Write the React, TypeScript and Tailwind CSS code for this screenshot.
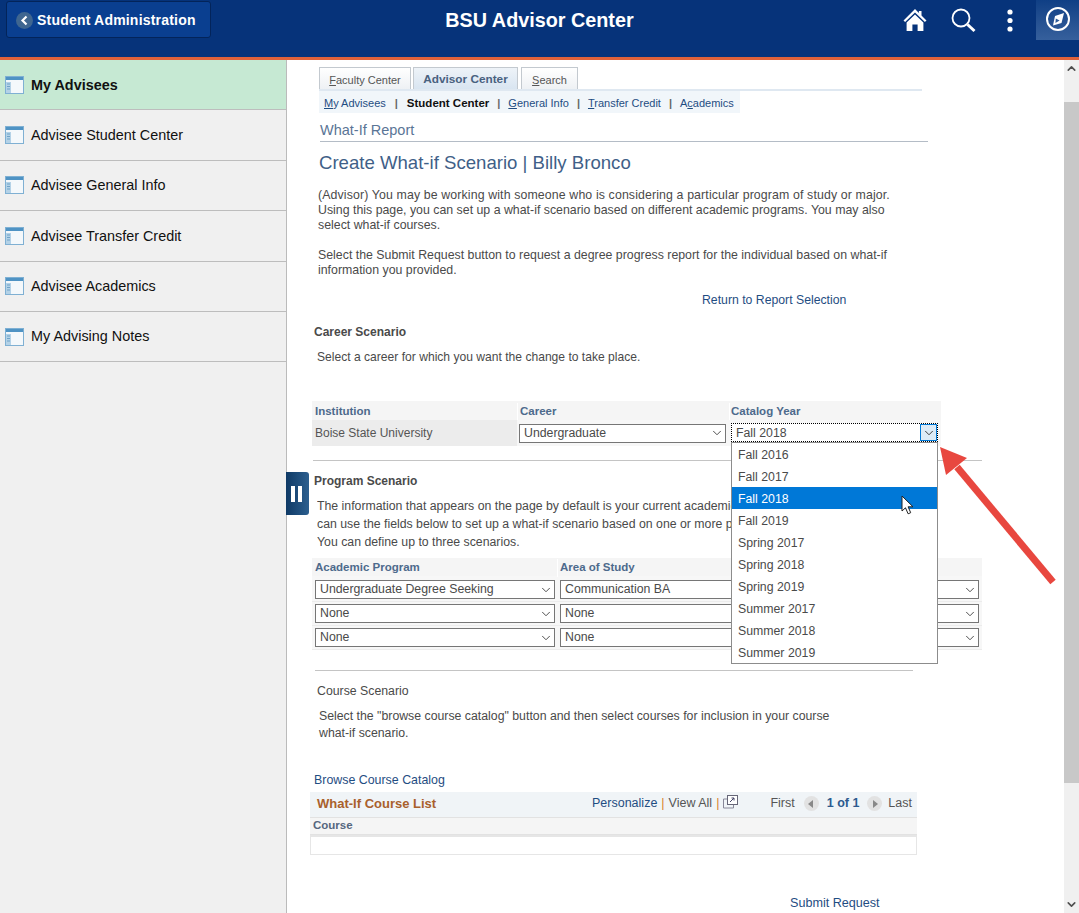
import { ChevronDown, ChevronUp } from "lucide-react";

const sideItems = [
  "My Advisees",
  "Advisee Student Center",
  "Advisee General Info",
  "Advisee Transfer Credit",
  "Advisee Academics",
  "My Advising Notes",
];

const terms = [
  "Fall 2016",
  "Fall 2017",
  "Fall 2018",
  "Fall 2019",
  "Spring 2017",
  "Spring 2018",
  "Spring 2019",
  "Summer 2017",
  "Summer 2018",
  "Summer 2019",
];

function PageIcon() {
  return (
    <svg width="19" height="18" viewBox="0 0 19 18" className="shrink-0">
      <rect x="0.5" y="0.5" width="18" height="17" fill="#f4f8fb" stroke="#7fb0d3" />
      <rect x="1" y="1" width="17" height="3" fill="#4f93c4" />
      <rect x="1" y="6" width="5" height="11" fill="#b4d2e7" />
      <path d="M2 8h3M2 10.5h3M2 13h3" stroke="#6fa3c8" strokeWidth="1" />
    </svg>
  );
}

function Select({ value, className }: { value: string; className: string }) {
  return (
    <div
      className={`flex h-[19px] items-center justify-between border border-[#767676] bg-white pl-[4px] pr-[1px] text-[12.3px] text-[#4a4a4a] ${className}`}
    >
      <span className="whitespace-nowrap">{value}</span>
      <ChevronDown size={14} strokeWidth={1.6} className="shrink-0 text-[#444]" />
    </div>
  );
}

function Header() {
  return (
    <header className="h-[60px] shrink-0 border-b-[3px] border-[#e0623a] bg-[#06337a]">
      <div className="grid h-[57px] grid-cols-[1fr_auto_1fr] items-start">
        <div className="ml-[6px] mt-[1px] flex h-[37px] w-[205px] items-center rounded-[3px] border border-[#03245a] bg-[#0a3f90] pl-[9px] pt-[1px]">
          <span className="flex h-[17px] w-[17px] items-center justify-center rounded-full bg-[#3f6690]">
            <svg width="9" height="11" viewBox="0 0 9 11">
              <path d="M6.5 1.5 2.5 5.5l4 4" fill="none" stroke="#fff" strokeWidth="2.2" />
            </svg>
          </span>
          <span className="ml-[4px] text-[14px] font-bold tracking-[0.2px] text-white">
            Student Administration
          </span>
        </div>
        <div className="pt-[7px] text-center text-[19.8px] font-bold leading-[26px] text-white">
          BSU Advisor Center
        </div>
        <div className="flex items-start justify-end">
          <svg width="24" height="24" viewBox="0 0 24 24" className="mt-[8px]">
            <path d="M12 1 0.5 12.5l1.6 1.6L12 4.4l9.9 9.7 1.6-1.6L18.5 7.6V3h-2.6v2.1z" fill="#fff" />
            <path d="M3.6 14.6 12 6.4l8.4 8.2V23H14.6v-6.4H9.4V23H3.6z" fill="#fff" />
          </svg>
          <svg width="25" height="25" viewBox="0 0 25 25" className="ml-[24px] mt-[8px]">
            <circle cx="10" cy="10" r="8.5" fill="none" stroke="#fff" strokeWidth="1.8" />
            <path d="M16.5 16.5 23.5 23" stroke="#fff" strokeWidth="3" />
          </svg>
          <svg width="6" height="24" viewBox="0 0 6 24" className="ml-[31px] mt-[9px]">
            <circle cx="3" cy="3" r="2.6" fill="#fff" />
            <circle cx="3" cy="11.5" r="2.6" fill="#fff" />
            <circle cx="3" cy="20" r="2.6" fill="#fff" />
          </svg>
          <div className="ml-[23px] flex h-[40px] w-[43px] items-center justify-center bg-gradient-to-b from-[#0f3f85] to-[#36609c] pb-[2px] pl-[1px]">
            <svg width="26" height="26" viewBox="0 0 26 26">
              <circle cx="13" cy="13" r="11" fill="none" stroke="#fff" strokeWidth="2" />
              <path d="M19 7 16.5 17 8 19.5 10 10z" fill="#fff" />
              <path d="M10.8 12.5 14.6 14.6 10.4 17z" fill="#2d5a98" />
            </svg>
          </div>
        </div>
      </div>
    </header>
  );
}

function Sidebar() {
  return (
    <aside className="w-[287px] shrink-0 border-r border-[#bbb] bg-[#f0f0f0]">
      {sideItems.map((item, i) => (
        <div
          key={item}
          className={`flex h-[50.4px] items-center border-b border-[#bdbdbd] pl-[5px] text-[#111] ${
            i === 0 ? "bg-[#c6e9d3] font-bold" : ""
          }`}
        >
          <PageIcon />
          <span className={`ml-[7px] text-[14.4px] ${i === 0 ? "pt-[2px]" : "pt-[1px]"}`}>{item}</span>
        </div>
      ))}
    </aside>
  );
}

function Tabs() {
  return (
    <div className="ml-[32px] w-[603px]">
      <div className="flex h-[23px] items-end gap-[2px] border-b-2 border-[#dfe8f1]">
        <div className="flex h-[22px] w-[92px] items-center justify-center border border-b-0 border-[#c3c9cf] bg-gradient-to-b from-white to-[#eef1f4] pt-[3px] text-[11px] text-[#555]">
          <span><u>F</u>aculty Center</span>
        </div>
        <div className="flex h-[22px] w-[105px] items-center justify-center border border-b-0 border-[#c3c9cf] bg-gradient-to-b from-[#eef3f8] to-[#d9e5f1] pt-[2px] text-[11.8px] font-bold text-[#49617f]">
          Advisor Center
        </div>
        <div className="ml-[1px] flex h-[22px] w-[57px] items-center justify-center border border-b-0 border-[#c3c9cf] bg-gradient-to-b from-white to-[#eef1f4] pt-[3px] text-[11px] text-[#555]">
          <span><u>S</u>earch</span>
        </div>
      </div>
      <div className="flex h-[22px] w-[421px] items-center bg-[#f1f6fa] pl-[5px] pt-[3px] text-[11px] text-[#1f4d82]">
        <span><u>M</u>y Advisees</span>
        <span className="mx-[9px] font-bold text-[#666]">|</span>
        <span className="text-[11.5px] font-bold text-[#111]">Student Center</span>
        <span className="mx-[8px] font-bold text-[#666]">|</span>
        <span><u>G</u>eneral Info</span>
        <span className="mx-[8px] font-bold text-[#666]">|</span>
        <span><u>T</u>ransfer Credit</span>
        <span className="mx-[8px] font-bold text-[#666]">|</span>
        <span>A<u>c</u>ademics</span>
      </div>
    </div>
  );
}

function IntroText() {
  return (
    <div className="ml-[31px] text-[12.35px] leading-[15px] text-[#4a4a4a]">
      <p className="tracking-[0.12px]">(Advisor) You may be working with someone who is considering a particular program of study or major.</p>
      <p>Using this page, you can set up a what-if scenario based on different academic programs. You may also</p>
      <p>select what-if courses.</p>
      <p className="mt-[15px]">Select the Submit Request button to request a degree progress report for the individual based on what-if</p>
      <p>information you provided.</p>
    </div>
  );
}

function CareerTable() {
  return (
    <div className="ml-[25px] mt-[36px] w-[629px] text-[11.5px]">
      <div className="flex h-[19px] items-center bg-[#f5f5f5] pt-[2px] font-bold text-[#4d6a8c]">
        <div className="w-[205px] pl-[3px]">Institution</div>
        <div className="w-[212px] border-l border-white pl-[2px]">Career</div>
        <div className="border-l border-white pl-[1px]">Catalog Year</div>
      </div>
      <div className="flex h-[26px] items-center bg-[#f7f7f7]">
        <div className="flex h-[26px] w-[205px] items-center bg-[#ececec] pl-[3px] text-[12px] text-[#555]">
          Boise State University
        </div>
        <Select value="Undergraduate" className="ml-[2px] w-[207px]" />
      </div>
    </div>
  );
}

function ProgramTable() {
  return (
    <div className="ml-[25px] mt-[7px] w-[670px]">
      <div className="flex h-[18px] items-center bg-[#f5f5f5] pt-[2px] text-[11.5px] font-bold text-[#4d6a8c]">
        <div className="w-[245px] pl-[3px]">Academic Program</div>
        <div className="border-l border-white pl-[2px]">Area of Study</div>
      </div>
      <div className="bg-[#f7f7f7] pt-[2px]">
        {[
          ["Undergraduate Degree Seeking", "Communication BA"],
          ["None", "None"],
          ["None", "None"],
        ].map((row, i) => (
          <div key={i} className="flex h-[24px] items-start border-b border-[#ececec] pl-[3px] pt-[2px]">
            <Select value={row[0]} className="w-[240px]" />
            <Select value={row[1]} className="ml-[5px] w-[210px]" />
            <Select value="" className="ml-[5px] w-[204px]" />
          </div>
        ))}
      </div>
    </div>
  );
}

function CourseList() {
  return (
    <div className="ml-[23px] mt-[4px] w-[607px] text-[12.5px]">
      <div className="flex h-[25px] items-center bg-[#f0f4f7] pb-[2px] pl-[7px] pr-[5px]">
        <span className="text-[13px] font-bold text-[#a9602c]">What-If Course List</span>
        <span className="ml-auto text-[#1f4d82]">Personalize</span>
        <span className="mx-[4px] text-[#d9822b]">|</span>
        <span className="text-[#555]">View All</span>
        <span className="mx-[4px] text-[#d9822b]">|</span>
        <svg width="15" height="14" viewBox="0 0 15 14" className="mb-[3px]">
          <rect x="4.5" y="0.5" width="10" height="9" fill="#fff" stroke="#667" />
          <path d="M4 4H0.5v9h10V10" fill="none" stroke="#889" />
          <path d="M7 7 11 3M8.5 3H11V5.5" fill="none" stroke="#446" />
        </svg>
        <span className="ml-[32px] text-[#555]">First</span>
        <span className="ml-[9px] flex h-[15px] w-[15px] items-center justify-center rounded-full bg-[#e2e2e2]">
          <svg width="6" height="8" viewBox="0 0 6 8"><path d="M5 0v8L0 4z" fill="#888" /></svg>
        </span>
        <span className="ml-[8px] font-bold text-[#2c5b8f]">1 of 1</span>
        <span className="ml-[8px] flex h-[15px] w-[15px] items-center justify-center rounded-full bg-[#e2e2e2]">
          <svg width="6" height="8" viewBox="0 0 6 8"><path d="M1 0v8l5-4z" fill="#888" /></svg>
        </span>
        <span className="ml-[6px] text-[#555]">Last</span>
      </div>
      <div className="flex h-[18px] items-center border-y border-[#e2e2e2] bg-[#f5f5f5] pl-[3px] text-[11.5px] font-bold text-[#55677f]">
        Course
      </div>
      <div className="h-[20px] border border-t-2 border-[#e6e6e6]" />
    </div>
  );
}

function Scrollbar() {
  return (
    <div className="flex w-[15px] shrink-0 flex-col bg-[#f0f0f0]">
      <div className="flex h-[42px] justify-center pt-[2px]">
        <ChevronUp size={13} strokeWidth={3} className="text-[#505050]" />
      </div>
      <div className="h-[681px] bg-[#c8c8c8]" />
      <div className="mt-auto flex justify-center pb-[2px]">
        <ChevronDown size={13} strokeWidth={3} className="text-[#505050]" />
      </div>
    </div>
  );
}

export default function App() {
  return (
    <div className="flex h-[913px] w-[1079px] flex-col overflow-hidden bg-white font-['Liberation_Sans',Arial,sans-serif]">
      <Header />
      <div className="flex min-h-0 flex-1">
        <Sidebar />
        <main className="relative flex min-w-0 flex-1 flex-col pt-[8px]">
          <Tabs />

          <div className="ml-[33px] mt-[9px] w-[608px] border-b border-[#b4bcc6] pb-[2px] text-[14.5px] leading-[17px] text-[#5a7596]">
            What-If Report
          </div>
          <h1 className="ml-[32px] mt-[10px] text-[18.6px] leading-[22px] text-[#3f5f88]">
            Create What-if Scenario | Billy Bronco
          </h1>
          <div className="mt-[14px]">
            <IntroText />
          </div>
          <div className="ml-[415px] mt-[15px] text-[12.25px] leading-[15px] text-[#1f4d82]">
            Return to Report Selection
          </div>

          <div className="ml-[27px] mt-[17px] text-[12px] font-bold leading-[15px] text-[#4a4a4a]">Career Scenario</div>
          <div className="ml-[30px] mt-[10px] text-[12.1px] leading-[15px] text-[#4a4a4a]">
            Select a career for which you want the change to take place.
          </div>
          <CareerTable />

          <div className="ml-[26px] mt-[14px] w-[669px] border-t border-[#c4c4c4]" />
          <div className="ml-[27px] mt-[13px] text-[12px] font-bold leading-[15px] text-[#4a4a4a]">Program Scenario</div>
          <div className="ml-[30px] mt-[8px] w-[414px] overflow-hidden whitespace-nowrap text-[12.3px] leading-[18px] text-[#4a4a4a]">
            <p>The information that appears on the page by default is your current academic program.</p>
            <p>can use the fields below to set up a what-if scenario based on one or more programs.</p>
            <p>You can define up to three scenarios.</p>
          </div>
          <ProgramTable />

          <div className="ml-[28px] mt-[20px] w-[598px] border-t border-[#c4c4c4]" />
          <div className="ml-[30px] mt-[13px] text-[12.3px] leading-[15px] text-[#4a4a4a]">Course Scenario</div>
          <div className="ml-[32px] mt-[9px] text-[12.3px] leading-[17px] text-[#4a4a4a]">
            <p>Select the "browse course catalog" button and then select courses for inclusion in your course</p>
            <p>what-if scenario.</p>
          </div>
          <div className="ml-[27px] mt-[31px] text-[12.4px] leading-[15px] text-[#1f4d82]">Browse Course Catalog</div>
          <CourseList />
          <div className="ml-[503px] mt-[41px] text-[12.6px] leading-[15px] text-[#1f4d82]">Submit Request</div>

          {/* collapse handle */}
          <div className="absolute left-[-1px] top-[412px] flex h-[43px] w-[23px] items-center justify-center gap-[3px] rounded-r-[3px] bg-gradient-to-r from-[#0f3a66] to-[#2c5f8f] pr-[3px]">
            <span className="h-[16px] w-[4px] bg-white" />
            <span className="h-[16px] w-[4px] bg-white" />
          </div>

          {/* open catalog year select */}
          <div className="absolute left-[444px] top-[363px] flex h-[19px] w-[207px] items-center justify-between border border-dotted border-black bg-white pl-[4px] text-[12.3px] text-[#4a4a4a]">
            <span className="pt-[1px]">Fall 2018</span>
            <span className="flex h-[17px] w-[17px] items-center justify-center border border-[#0078d7] bg-[#dcebf7]">
              <ChevronDown size={14} strokeWidth={1.6} className="text-[#333]" />
            </span>
          </div>
          <div className="absolute left-[444px] top-[382px] w-[207px] border border-[#8c8c8c] bg-white text-[12.3px] text-[#4a4a4a]">
            {terms.map((t) => (
              <div
                key={t}
                className={`flex h-[22px] items-center pl-[6px] pt-[2px] ${t === "Fall 2018" ? "bg-[#0078d7] text-white" : ""}`}
              >
                {t}
              </div>
            ))}
          </div>

          {/* cursor */}
          <svg width="13" height="20" viewBox="0 0 13 20" className="absolute left-[614px] top-[435px]">
            <path d="M1 1v15l3.5-3.2 2.6 6 2.6-1.1-2.6-5.9H12z" fill="#fff" stroke="#222" strokeWidth="1" />
          </svg>

          {/* red arrow */}
          <svg width="125" height="150" viewBox="0 0 125 150" className="absolute left-[650px] top-[385px]">
            <path d="M116 137 20 22" stroke="#e8473f" strokeWidth="7" />
            <path d="M3 2 30 13 9 30z" fill="#e8473f" />
          </svg>
        </main>
        <Scrollbar />
      </div>
    </div>
  );
}
